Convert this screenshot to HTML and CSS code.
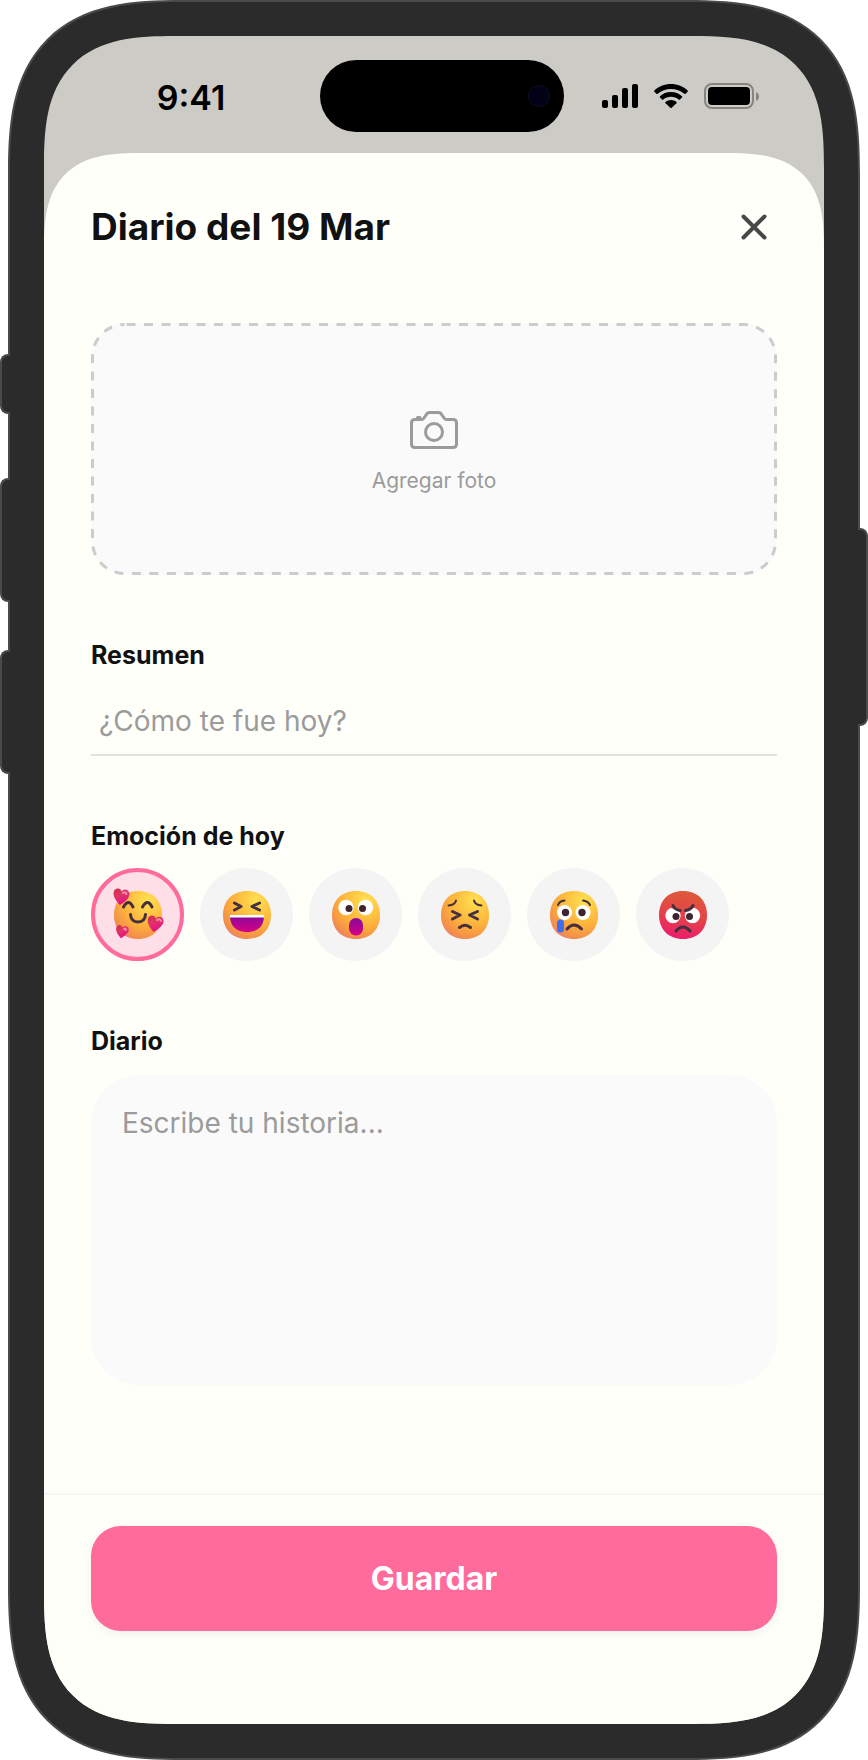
FILE: index.html
```html
<!DOCTYPE html>
<html lang="es">
<head>
	<meta charset="utf-8">
	<meta name="viewport" content="width=device-width, initial-scale=1">
	<title>Diario del 19 Mar</title>
	<link rel="stylesheet" href="styles.css">
</head>

<body>
	<!-- gradients and shapes shared by the emojis -->
	<svg class="defs" width="0" height="0" aria-hidden="true">
		<defs>
			<radialGradient id="yellow" cx="0.7" cy="0.2" r="0.95">
				<stop offset="0" stop-color="#ffe150"/>
				<stop offset="0.55" stop-color="#fdb13b"/>
				<stop offset="0.85" stop-color="#f28d4a"/>
				<stop offset="1" stop-color="#e9749a"/>
			</radialGradient>
			<linearGradient id="red" x1="0.6" y1="0" x2="0.4" y2="1">
				<stop offset="0" stop-color="#de5a38"/>
				<stop offset="0.55" stop-color="#e5404c"/>
				<stop offset="1" stop-color="#ec1c6c"/>
			</linearGradient>
			<linearGradient id="mouth" x1="0" y1="0" x2="0" y2="1">
				<stop offset="0" stop-color="#870a9c"/>
				<stop offset="1" stop-color="#d80084"/>
			</linearGradient>
			<linearGradient id="love" x1="0" y1="0" x2="0.6" y2="1">
				<stop offset="0" stop-color="#d02e4c"/>
				<stop offset="0.5" stop-color="#de3567"/>
				<stop offset="1" stop-color="#e80a8c"/>
			</linearGradient>
			<path id="face" d="M24 0C38.500 0 48 9.500 48 24S38.500 48 24 48 0 38.500 0 24 9.500 0 24 0Z"/>
			<path id="heart" d="M0 8C-5 4-8-0-8-3.500C-8-6-6-8-4-8C-2-8-.8-7 0-5.500C.8-7 2-8 4-8C6-8 8-6 8-3.500C8 0 5 4 0 8Z"/>
		</defs>
	</svg>

	<div class="phone">
		<span class="key key-action"></span>
		<span class="key key-up"></span>
		<span class="key key-down"></span>
		<span class="key key-power"></span>

		<div class="screen">
			<header class="status">
				<span class="time">9:41</span>
				<span class="island"><span class="lens"></span></span>
				<span class="signals">
					<svg width="36" height="24" viewBox="0 0 36 24">
						<rect x="0" y="16" width="6" height="8" rx="2"/>
						<rect x="10" y="11" width="6" height="13" rx="2"/>
						<rect x="20" y="4" width="6" height="20" rx="2"/>
						<rect x="30" y="0" width="6" height="24" rx="2"/>
					</svg>
					<svg width="34" height="24" viewBox="0 0 34 24">
						<path d="M17 0C23.500 0 29.500 2.500 33.600 6.400Q34.300 7.100 33.600 7.800L31.600 9.800Q31 10.400 30.300 9.800C26.700 6.600 22 4.900 17 4.900S7.300 6.600 3.700 9.800Q3 10.400 2.400 9.800L.4 7.800Q-.3 7.100 .4 6.400C4.500 2.500 10.500 0 17 0Z"/>
						<path d="M17 8C21.300 8 25.200 9.600 28 12.200Q28.700 12.900 28 13.600L26 15.600Q25.400 16.200 24.700 15.600C22.600 13.800 19.900 12.800 17 12.800S11.400 13.800 9.300 15.600Q8.600 16.200 8 15.600L6 13.600Q5.300 12.900 6 12.200C8.800 9.600 12.700 8 17 8Z"/>
						<path d="M17 16C19.100 16 21 16.700 22.400 17.900Q23.100 18.600 22.400 19.300L17.700 23.700Q17 24.300 16.300 23.700L11.600 19.300Q10.900 18.600 11.600 17.900C13 16.700 14.900 16 17 16Z"/>
					</svg>
					<svg width="56" height="26" viewBox="0 0 56 26">
						<rect x="1" y="1" width="48" height="24" rx="7" fill="none" stroke="#858481" stroke-width="2"/>
						<rect x="4" y="4" width="42" height="18" rx="4"/>
						<path d="M52 9Q55 10.500 55 13.500T52 18Z" fill="#858481"/>
					</svg>
				</span>
			</header>

			<form class="sheet">
				<div class="heading">
					<h1>Diario del 19 Mar</h1>
					<button type="button" class="close" aria-label="Cerrar">
						<svg width="26" height="26" viewBox="0 0 26 26">
							<path d="M2.500 2.500L23.500 23.500M23.500 2.500L2.500 23.500"/>
						</svg>
					</button>
				</div>

				<button type="button" class="photo">
					<svg class="dashes" aria-hidden="true"><rect x="1.500" y="1.500" rx="32"/></svg>
					<svg class="camera" width="48" height="38" viewBox="0 0 48 38">
						<path d="M5 8.500H11Q13 8.500 14 7L16 4Q17.200 1.500 19.500 1.500H28.500Q30.800 1.500 32 4L34 7Q35 8.500 37 8.500H43Q46.500 8.500 46.500 12V33Q46.500 36.500 43 36.500H5Q1.500 36.500 1.500 33V12Q1.500 8.500 5 8.500Z"/>
						<circle cx="24" cy="21" r="8.500"/>
						<path d="M7.500 6.500H10"/>
					</svg>
					<span>Agregar foto</span>
				</button>

				<label class="title" for="resumen">Resumen</label>
				<input class="summary" id="resumen" type="text" placeholder="¿Cómo te fue hoy?">

				<fieldset class="moods">
					<legend class="title">Emoción de hoy</legend>
					<div class="mood-list">
						<label class="mood">
							<input type="radio" name="mood" aria-label="Amor" checked>
							<svg viewBox="0 0 48 48">
								<use href="#face" fill="url(#yellow)"/>
								<path class="line" d="M9.500 16Q14.500 7 19 16M28.500 16Q33.500 7 38 16M16.500 23.500Q17 31 24 31T31.500 23.500"/>
								<use href="#heart" fill="url(#love)" transform="translate(7 6) rotate(8)"/>
								<use href="#heart" fill="url(#love)" transform="translate(41 33) rotate(10)"/>
								<use href="#heart" fill="url(#love)" transform="translate(8 41) rotate(10) scale(.8)"/>
								<g class="shine">
									<path d="M9 2Q11 0 12.500 3"/>
									<path d="M43 29Q46 27 47 30"/>
									<path d="M10 38Q11.500 37 12 39"/>
								</g>
							</svg>
						</label>
						<label class="mood">
							<input type="radio" name="mood" aria-label="Risa">
							<svg viewBox="0 0 48 48">
								<use href="#face" fill="url(#yellow)"/>
								<path class="line" d="M11.500 12L18 15.500L11.500 19M36.500 12L29 15.500L36.500 19"/>
								<path d="M7 24.500H41C41 36 34 41 24 41S7 36 7 24.500Z" fill="url(#mouth)"/>
								<path d="M7 24H41V26.500H7Z" fill="#fff"/>
							</svg>
						</label>
						<label class="mood">
							<input type="radio" name="mood" aria-label="Sorpresa">
							<svg viewBox="0 0 48 48">
								<use href="#face" fill="url(#yellow)"/>
								<g fill="#fff"><circle cx="14" cy="16.500" r="7.700"/><circle cx="33.500" cy="16.500" r="7.700"/></g>
								<g class="pupil"><circle cx="17" cy="17.500" r="3.500"/><circle cx="30.500" cy="17.500" r="3.500"/></g>
								<rect x="17" y="27" width="14" height="17.500" rx="7" fill="url(#mouth)"/>
							</svg>
						</label>
						<label class="mood">
							<input type="radio" name="mood" aria-label="Frustración">
							<svg viewBox="0 0 48 48">
								<use href="#face" fill="url(#yellow)"/>
								<path class="line thin" d="M7.500 14.500Q14 14 15 9.500M33 9.500Q34 14 40.500 14.500"/>
								<path class="line" d="M11.500 20.500L19 24L11.500 28M36.500 20.500L28.500 24L36.500 28M18.500 36.500Q24 32 29.500 36.500"/>
							</svg>
						</label>
						<label class="mood">
							<input type="radio" name="mood" aria-label="Tristeza">
							<svg viewBox="0 0 48 48">
								<use href="#face" fill="url(#yellow)"/>
								<path class="line thin" d="M8 14Q9.500 10 14.500 9.500M33 9.500Q38 10 40 14"/>
								<g fill="#fff"><circle cx="14.500" cy="21.500" r="7.500"/><circle cx="33" cy="21.500" r="7.500"/></g>
								<g class="pupil"><circle cx="15.500" cy="21.500" r="3.700"/><circle cx="32" cy="21.500" r="3.700"/></g>
								<path class="line" d="M17 38Q24 30 31.500 38"/>
								<rect x="7" y="28.500" width="7" height="13" rx="3.500" fill="#3f6df2"/>
							</svg>
						</label>
						<label class="mood">
							<input type="radio" name="mood" aria-label="Enojo">
							<svg viewBox="0 0 48 48">
								<use href="#face" fill="url(#red)"/>
								<g fill="#fff"><circle cx="14" cy="24.500" r="7.700"/><circle cx="33.500" cy="24.500" r="7.700"/></g>
								<path d="M12 13L21 19.500H27L36 13V16L27 20.500H21L12 17Z" fill="#e24a42"/>
								<g class="pupil"><circle cx="17" cy="25.500" r="3.500"/><circle cx="30.500" cy="25.500" r="3.500"/></g>
								<path class="line" d="M14 14.500Q16 19 21 19.500M26.500 19.500Q31.500 19 34 14.500M17 40Q24 32 31 40"/>
							</svg>
						</label>
					</div>
				</fieldset>

				<label class="title" for="historia">Diario</label>
				<textarea class="story" id="historia" placeholder="Escribe tu historia..."></textarea>

				<footer class="actions">
					<button type="submit" class="save">Guardar</button>
				</footer>
			</form>
		</div>
	</div>
</body>
</html>
```

FILE: styles.css
```css
* {
	box-sizing: border-box;
}

body {
	margin: 0;
	background: #fff;
	color: #111;
	font-family: Inter, "Liberation Sans", sans-serif;
}

button, input, textarea {
	font-family: inherit;
}

button {
	border: 0;
	padding: 0;
	cursor: pointer;
}

.defs {
	position: absolute;
}

/* phone body */
.phone {
	position: relative;
	display: flex;
	min-height: 100vh;
	margin: 0 8px;
	padding: 34px;
	border: 2px solid #4a4a4a;
	border-radius: 132px;
	background: #2b2b2b;
}

.screen {
	flex: 1;
	display: flex;
	flex-direction: column;
	min-width: 0;
	overflow: hidden;
	border-radius: 98px;
	background: #cccbc6;
}

/* side keys */
.key {
	position: absolute;
	left: -10px;
	width: 10px;
	border: 2px solid #4a4a4a;
	border-right: 0;
	border-radius: 8px 0 0 8px;
	background: #2b2b2b;
}

.key-action {
	top: 352px;
	height: 60px;
}

.key-up {
	top: 476px;
	height: 124px;
}

.key-down {
	top: 648px;
	height: 124px;
}

.key-power {
	top: 526px;
	left: auto;
	right: -10px;
	height: 198px;
	border-right: 2px solid #4a4a4a;
	border-left: 0;
	border-radius: 0 8px 8px 0;
}

/* status bar */
.status {
	display: grid;
	grid-template-columns: 1fr 244px 1fr;
	align-items: center;
	height: 117px;
	padding: 3px 0 0 16px;
	color: #000;
}

.time {
	padding: 4px 0 0 2px;
	font-size: 34px;
	font-weight: 600;
	line-height: 40px;
	text-align: center;
}

.island {
	display: flex;
	align-items: center;
	justify-content: flex-end;
	height: 72px;
	padding-right: 14px;
	border-radius: 36px;
	background: #000;
}

.lens {
	width: 22px;
	height: 22px;
	border: 1px solid #0d0d22;
	border-radius: 50%;
	background: #020216;
}

.signals {
	display: flex;
	align-items: center;
	gap: 16px;
	padding-left: 38px;
}

/* sheet */
.sheet {
	flex: 1;
	display: flex;
	flex-direction: column;
	padding: 0 47px;
	border-radius: 80px 80px 0 0;
	background: #fffffa;
}

.heading {
	display: flex;
	align-items: center;
	justify-content: space-between;
	padding: 50px 10px 0 0;
}

h1 {
	margin: 0;
	font-size: 37px;
	font-weight: 700;
	line-height: 48px;
}

.close {
	height: 26px;
	background: none;
}

.close svg {
	display: block;
	fill: none;
	stroke: #484848;
	stroke-width: 4;
	stroke-linecap: round;
}

.photo {
	position: relative;
	display: flex;
	flex-direction: column;
	align-items: center;
	justify-content: center;
	gap: 18px;
	height: 252px;
	margin: 72px 0 64px;
	padding-top: 8px;
	border-radius: 34px;
	background: #fafafa;
	color: #9b9b9b;
	font-size: 21px;
	line-height: 28px;
}

.dashes {
	position: absolute;
	inset: 0;
	width: 100%;
	height: 100%;
}

.dashes rect {
	width: calc(100% - 3px);
	height: calc(100% - 3px);
	fill: none;
	stroke: #ccc;
	stroke-width: 3;
	stroke-dasharray: 9 8.5;
	stroke-dashoffset: -2;
}

.camera {
	fill: none;
	stroke: #9b9b9b;
	stroke-width: 3;
	stroke-linecap: round;
}

.title {
	padding: 0;
	font-size: 25px;
	font-weight: 700;
	line-height: 32px;
}

.summary {
	width: 100%;
	height: 85px;
	margin-bottom: 64px;
	padding: 16px 8px 0;
	border: 0;
	border-bottom: 2px solid #e0e2e2;
	background: none;
	font-size: 28px;
}

::placeholder {
	color: #9b9b9b;
	opacity: 1;
}

/* emotions */
.moods {
	min-width: 0;
	margin: 0 0 64px;
	padding: 0;
	border: 0;
}

.mood-list {
	display: flex;
	gap: 16px;
	margin-top: 16px;
}

.mood {
	display: flex;
	align-items: center;
	justify-content: center;
	width: 93px;
	height: 93px;
	border-radius: 50%;
	background: #f4f4f5;
	cursor: pointer;
}

.mood:has(:checked) {
	border: 4px solid #ff6b9b;
	background: #ffdfe7;
}

.mood input {
	position: absolute;
	opacity: 0;
}

.mood svg {
	width: 48px;
	height: 48px;
	overflow: visible;
}

.line {
	fill: none;
	stroke: #44303f;
	stroke-width: 3;
	stroke-linecap: round;
	stroke-linejoin: round;
}

.thin {
	stroke-width: 2;
}

.pupil {
	fill: #3d2430;
}

.shine {
	fill: none;
	stroke: #f58aa8;
	stroke-width: 2;
	stroke-linecap: round;
}

.story {
	width: 100%;
	height: 310px;
	margin-top: 18px;
	padding: 30px 31px;
	border: 0;
	border-radius: 48px;
	background: #fafafa;
	font-size: 28px;
	line-height: 36px;
	resize: none;
}

.actions {
	margin: auto -47px 0;
	padding: 31px 47px 93px;
	border-top: 2px solid #f6f6f6;
}

.save {
	width: 100%;
	height: 105px;
	border-radius: 30px;
	background: #ff6b9b;
	box-shadow: 0 3px 8px rgba(0, 0, 0, 0.06);
	color: #fff;
	font-size: 32px;
	font-weight: 700;
}

/* smoother corners where the browser can draw them */
@supports (corner-shape: superellipse(1.5)) {
	.phone {
		border-radius: 174px;
		corner-shape: superellipse(1.45);
	}

	.screen {
		border-radius: 132px;
		corner-shape: superellipse(1.5);
	}

	.sheet {
		border-radius: 98px 98px 0 0;
		corner-shape: superellipse(1.5);
	}
}
```
